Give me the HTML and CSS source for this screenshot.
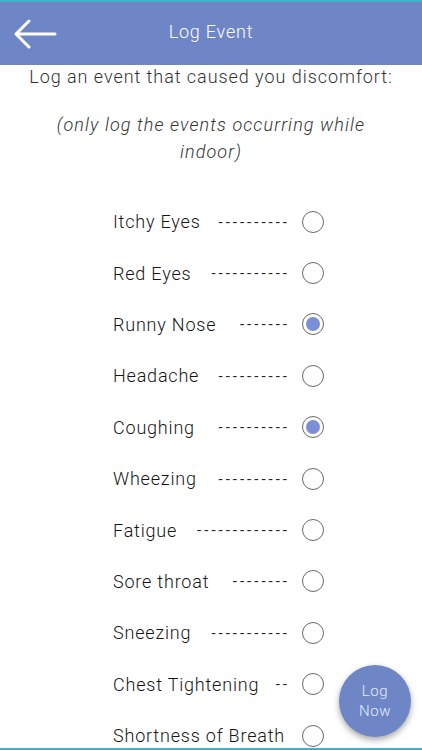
FILE: index.html
```html
<!DOCTYPE html>
<html>
<head>
<meta charset="utf-8">
<link rel="stylesheet" href="styles.css">
</head>
<body>
<div class="topline"></div>
<header class="bar">
  <svg class="back" width="44" height="30" viewBox="0 0 44 30"><path d="M42 15H3M16 2L3 15l13 13" fill="none" stroke="#fff" stroke-width="3" stroke-linecap="round" stroke-linejoin="round"/></svg>
  <div class="title">Log Event</div>
</header>
<main class="content">
  <p class="intro">Log an event that caused you discomfort:</p>
  <p class="note">(only log the events occurring while indoor)</p>
  <ul class="list">
    <li class="row"><span class="label">Itchy Eyes</span><span class="dash">----------</span><span class="radio"></span></li>
    <li class="row"><span class="label">Red Eyes</span><span class="dash">-----------</span><span class="radio"></span></li>
    <li class="row"><span class="label">Runny Nose</span><span class="dash">-------</span><span class="radio on"></span></li>
    <li class="row"><span class="label">Headache</span><span class="dash">----------</span><span class="radio"></span></li>
    <li class="row"><span class="label">Coughing</span><span class="dash">----------</span><span class="radio on"></span></li>
    <li class="row"><span class="label">Wheezing</span><span class="dash">----------</span><span class="radio"></span></li>
    <li class="row"><span class="label">Fatigue</span><span class="dash">-------------</span><span class="radio"></span></li>
    <li class="row"><span class="label">Sore throat</span><span class="dash">--------</span><span class="radio"></span></li>
    <li class="row"><span class="label">Sneezing</span><span class="dash">-----------</span><span class="radio"></span></li>
    <li class="row"><span class="label">Chest Tightening</span><span class="dash">--</span><span class="radio"></span></li>
    <li class="row"><span class="label">Shortness of Breath</span><span class="radio last"></span></li>
  </ul>
</main>
<button class="fab">Log<br>Now</button>
<div class="bottomline"></div>
</body>
</html>
```
FILE: styles.css
```css
html, body { margin: 0; padding: 0; }
body {
  width: 422px;
  height: 750px;
  overflow: hidden;
  position: relative;
  background: #fff;
  font-family: Roboto, "Liberation Sans", sans-serif;
  font-weight: 300;
  color: #151515;
}
.topline { height: 2px; background: #3bb3c9; }
.bar {
  height: 63px;
  background: #6e86c6;
  display: flex;
  align-items: center;
  position: relative;
}
.back { margin-left: 13px; }
.title {
  position: absolute;
  left: 0; right: 0;
  text-align: center;
  color: #fff;
  font-size: 18px;
  letter-spacing: 0.8px;
  top: 19px;
}
.content { padding: 0 10px; }
.intro {
  margin: 1px 0 0;
  text-align: center;
  font-size: 18px;
  letter-spacing: 0.95px;
  line-height: 22px;
  color: #333;
}
.note {
  margin: 23px auto 0;
  width: 360px;
  text-align: center;
  font-style: italic;
  font-size: 18px;
  line-height: 27px;
  letter-spacing: 1.1px;
  color: #333;
}
.list {
  list-style: none;
  margin: 31px 0 0;
  padding: 0 0 0 103px;
}
.row {
  height: 51.4px;
  display: flex;
  align-items: center;
  width: 211px;
}
.label {
  flex: 1;
  font-size: 18px;
  letter-spacing: 0.8px;
  white-space: nowrap;
}
.dash {
  font-size: 15px;
  font-weight: 400;
  letter-spacing: 3px;
  margin-right: 12px;
  white-space: nowrap;
  color: #222;
}
.radio {
  width: 22px;
  height: 22px;
  flex: none;
  border: 1.5px solid #6a6a6a;
  border-radius: 50%;
  box-sizing: border-box;
  display: flex;
  align-items: center;
  justify-content: center;
}
.radio.on::after {
  content: "";
  width: 14px;
  height: 14px;
  border-radius: 50%;
  background: #7a8fd6;
}
.fab {
  position: absolute;
  left: 339px;
  top: 665px;
  width: 72px;
  height: 72px;
  border-radius: 50%;
  border: none;
  background: #6e86c6;
  color: #e8ecf8;
  font-family: Roboto, "Liberation Sans", sans-serif;
  font-weight: 300;
  font-size: 15px;
  letter-spacing: 0.6px;
  line-height: 20px;
  box-shadow: 0 3px 6px rgba(0,0,0,0.35);
  padding: 0;
}
.bottomline {
  position: absolute;
  left: 0; right: 0; bottom: 0;
  height: 2px;
  background: #3bb3c9;
}
```
